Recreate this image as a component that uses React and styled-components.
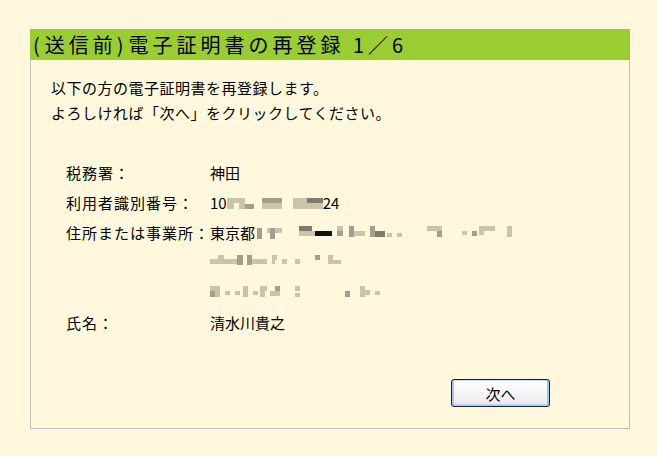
import React from "react";
import styled, { createGlobalStyle } from "styled-components";

const GlobalStyle = createGlobalStyle`
  html, body {
    margin: 0;
    padding: 0;
    background-color: #fff8dc;
  }
  body {
    font-family: "Noto Sans CJK JP", "Noto Sans", sans-serif;
    color: #000;
  }
`;

const Page = styled.div`
  width: 657px;
  height: 456px;
  padding: 29px 0 0 30px;
  box-sizing: border-box;
`;

const Panel = styled.section`
  display: flex;
  flex-direction: column;
  width: 600px;
  height: 400px;
  box-sizing: border-box;
  border: 1px solid #c0c0c0;
  border-top: none;
`;

const Header = styled.h1`
  margin: 0 -1px;
  height: 31px;
  padding-left: 3px;
  background-color: #9acd32;
  font-size: 20px;
  font-weight: normal;
  line-height: 31px;
  letter-spacing: 4px;
  white-space: nowrap;
`;

const Paren = styled.span`
  letter-spacing: 5px;
`;

const Body = styled.div`
  flex: 1;
  display: flex;
  flex-direction: column;
  padding: 15px 20px 21px 20px;
`;

const Intro = styled.p`
  margin: 0;
  font-size: 15px;
  line-height: 25px;
  letter-spacing: 0.5px;
`;

const InfoTable = styled.dl`
  display: grid;
  grid-template-columns: 144px 1fr;
  margin: 33px 0 0 15px;
  font-size: 15px;
  line-height: 30px;
`;

const Label = styled.dt`
  margin: 0;
  letter-spacing: 1px;
  white-space: nowrap;
`;

const Value = styled.dd`
  margin: 0;
  display: flex;
  flex-direction: column;
  white-space: nowrap;
`;

const ValueLine = styled.div`
  display: flex;
  align-items: center;
  height: 30px;
`;

const Actions = styled.div`
  margin-top: auto;
  display: flex;
  justify-content: flex-end;
  padding-right: 59px;
`;

const NextButton = styled.button`
  width: 99px;
  height: 28px;
  padding: 0;
  border: 1px solid #1e1e1e;
  border-radius: 3px;
  background: linear-gradient(#ffffff, #f6f6f8 50%, #e8e7ee);
  box-shadow: inset 2px 0 0 #a4c4f8, inset -2px 0 0 #a4c4f8,
    inset 0 1px 0 #cddffc, inset 0 -2px 0 #b4cff8;
  font-family: "Noto Sans CJK JP", sans-serif;
  font-size: 15px;
  color: #000;
  cursor: pointer;
`;

const shades = {
  l: "#cbc4ad",
  m: "#a49e8c",
  d: "#7e7a6e",
  k: "#111111",
};

// [x, y, w, h, shade] — redacted text drawn as a mosaic
const Mosaic = ({ width, cells }) => (
  <svg width={width} height="16" viewBox={`0 0 ${width} 16`}>
    {cells.map(([x, y, w, h, s], i) => (
      <rect key={i} x={x} y={y} width={w} height={h} fill={shades[s]} />
    ))}
  </svg>
);

const idCells = [
  [0, 3, 18, 5, "l"],
  [0, 8, 7, 6, "l"],
  [12, 3, 6, 11, "l"],
  [18, 9, 9, 5, "m"],
  [35, 3, 20, 5, "m"],
  [35, 8, 20, 6, "l"],
  [66, 3, 14, 11, "l"],
  [80, 3, 16, 5, "d"],
  [80, 8, 16, 6, "l"],
];

const addrCells = [
  [2, 3, 5, 11, "m"],
  [12, 3, 15, 5, "l"],
  [15, 3, 5, 11, "m"],
  [44, 1, 13, 5, "d"],
  [44, 6, 16, 5, "l"],
  [60, 6, 17, 5, "k"],
  [82, 1, 6, 5, "l"],
  [82, 6, 6, 5, "m"],
  [94, 1, 5, 11, "m"],
  [99, 6, 11, 5, "l"],
  [115, 1, 5, 11, "m"],
  [120, 6, 10, 6, "d"],
  [132, 8, 5, 4, "l"],
  [142, 8, 5, 4, "l"],
  [172, 1, 15, 5, "l"],
  [182, 6, 5, 6, "m"],
  [207, 6, 5, 4, "l"],
  [217, 6, 5, 5, "m"],
  [224, 1, 16, 5, "l"],
  [224, 6, 5, 4, "l"],
  [252, 1, 5, 11, "l"],
];

const addr2Cells = [
  [0, 4, 27, 5, "l"],
  [8, 0, 6, 9, "l"],
  [27, 0, 6, 10, "m"],
  [37, 0, 5, 10, "m"],
  [42, 4, 15, 5, "l"],
  [62, 0, 5, 5, "l"],
  [62, 5, 3, 4, "l"],
  [72, 4, 5, 5, "l"],
  [85, 4, 5, 5, "l"],
  [105, 0, 5, 5, "m"],
  [118, 0, 5, 9, "l"],
  [118, 5, 13, 4, "l"],
];

const addr3Cells = [
  [0, 1, 10, 5, "l"],
  [0, 6, 5, 6, "m"],
  [5, 6, 5, 6, "l"],
  [15, 6, 5, 4, "l"],
  [25, 6, 5, 4, "l"],
  [33, 1, 5, 11, "l"],
  [43, 6, 5, 4, "l"],
  [50, 1, 7, 5, "l"],
  [50, 6, 5, 6, "l"],
  [65, 1, 5, 5, "m"],
  [60, 6, 10, 5, "l"],
  [85, 1, 5, 5, "l"],
  [85, 8, 5, 4, "l"],
  [135, 6, 5, 6, "m"],
  [150, 1, 5, 11, "l"],
  [155, 5, 5, 5, "l"],
  [165, 6, 5, 4, "l"],
];

const App = () => (
  <>
    <GlobalStyle />
    <Page>
      <Panel>
        <Header>
          <Paren>(</Paren>送信前<Paren>)</Paren>電子証明書の再登録 1／6
        </Header>
        <Body>
          <Intro>
            以下の方の電子証明書を再登録します。
            <br />
            よろしければ「次へ」をクリックしてください。
          </Intro>

          <InfoTable>
            <Label>税務署：</Label>
            <Value>
              <ValueLine>神田</ValueLine>
            </Value>

            <Label>利用者識別番号：</Label>
            <Value>
              <ValueLine>
                10
                <Mosaic width={96} cells={idCells} />
                24
              </ValueLine>
            </Value>

            <Label>住所または事業所：</Label>
            <Value>
              <ValueLine>
                東京都
                <Mosaic width={260} cells={addrCells} />
              </ValueLine>
              <ValueLine>
                <Mosaic width={135} cells={addr2Cells} />
              </ValueLine>
              <ValueLine>
                <Mosaic width={175} cells={addr3Cells} />
              </ValueLine>
            </Value>

            <Label>氏名：</Label>
            <Value>
              <ValueLine>清水川貴之</ValueLine>
            </Value>
          </InfoTable>

          <Actions>
            <NextButton type="button">次へ</NextButton>
          </Actions>
        </Body>
      </Panel>
    </Page>
  </>
);

export default App;
